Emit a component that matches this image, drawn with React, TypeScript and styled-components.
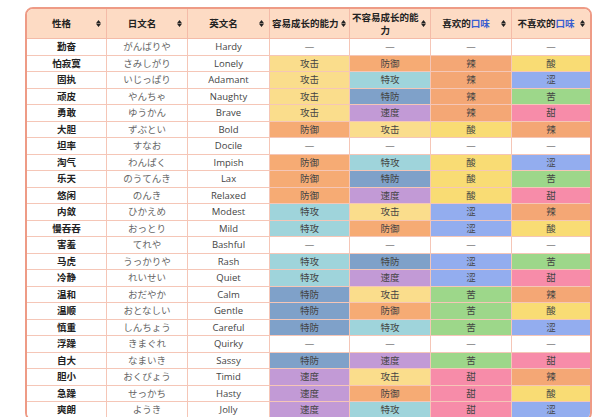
import React from 'react';
import styled, { createGlobalStyle } from 'styled-components';

const Global = createGlobalStyle`
  html, body { margin: 0; padding: 0; background: #fff; overflow: hidden; }
  body { font-family: "Open Sans", "Noto Sans CJK SC", sans-serif; }
`;

const Page = styled.div`
  padding: 7px 0 0 25px;
`;

const Frame = styled.div`
  width: 563px;
  border: 2px solid #ee9b86;
  border-radius: 8px;
  overflow: hidden;
`;

const Table = styled.table`
  width: 100%;
  table-layout: fixed;
  border-collapse: separate;
  border-spacing: 0;
  font-size: 9.5px;
`;

const Head = styled.th`
  height: 29px;
  padding: 0;
  background: #fddbc4;
  border-right: 1px solid #f4bba8;
  border-bottom: 1px solid #f4bba8;
  font-weight: bold;
  color: #222;
  line-height: 13px;
  &:last-child { border-right: none; }
`;

const HeadInner = styled.div`
  display: flex;
  align-items: center;
  padding: 0 5px 0 2px;
`;

const HeadText = styled.span`
  flex: 1;
  text-align: center;
  white-space: nowrap;
`;

const Link = styled.span`
  color: #3a5ed0;
`;

const SortIcon = styled.svg`
  width: 5px;
  height: 7px;
  flex: none;
  margin-left: 2px;
`;

const Cell = styled.td<{ $bg?: string; $kind?: 'name' | 'jp' | 'en' | 'val' }>`
  height: 15.5px;
  padding: 0;
  text-align: center;
  white-space: nowrap;
  line-height: 15px;
  background: ${(p) => p.$bg ?? '#fff'};
  border-right: 1px solid #f5c6b7;
  border-bottom: 1px solid #f5c6b7;
  font-weight: ${(p) => (p.$kind === 'name' ? 'bold' : 'normal')};
  color: ${(p) => (p.$kind === 'name' ? '#222' : p.$kind === 'jp' ? '#666' : '#444')};
  &:last-child { border-right: none; }
`;

const colors: Record<string, string> = {
  攻击: '#fadd8c',
  防御: '#f6ab74',
  特攻: '#9fd4db',
  特防: '#7fa1c9',
  速度: '#c29ad6',
  辣: '#f4a775',
  酸: '#f9dc74',
  涩: '#93adef',
  苦: '#9dd78a',
  甜: '#f78ca9',
};

const rows: string[][] = [
  ['勤奋', 'がんばりや', 'Hardy', '—', '—', '—', '—'],
  ['怕寂寞', 'さみしがり', 'Lonely', '攻击', '防御', '辣', '酸'],
  ['固执', 'いじっぱり', 'Adamant', '攻击', '特攻', '辣', '涩'],
  ['顽皮', 'やんちゃ', 'Naughty', '攻击', '特防', '辣', '苦'],
  ['勇敢', 'ゆうかん', 'Brave', '攻击', '速度', '辣', '甜'],
  ['大胆', 'ずぶとい', 'Bold', '防御', '攻击', '酸', '辣'],
  ['坦率', 'すなお', 'Docile', '—', '—', '—', '—'],
  ['淘气', 'わんぱく', 'Impish', '防御', '特攻', '酸', '涩'],
  ['乐天', 'のうてんき', 'Lax', '防御', '特防', '酸', '苦'],
  ['悠闲', 'のんき', 'Relaxed', '防御', '速度', '酸', '甜'],
  ['内敛', 'ひかえめ', 'Modest', '特攻', '攻击', '涩', '辣'],
  ['慢吞吞', 'おっとり', 'Mild', '特攻', '防御', '涩', '酸'],
  ['害羞', 'てれや', 'Bashful', '—', '—', '—', '—'],
  ['马虎', 'うっかりや', 'Rash', '特攻', '特防', '涩', '苦'],
  ['冷静', 'れいせい', 'Quiet', '特攻', '速度', '涩', '甜'],
  ['温和', 'おだやか', 'Calm', '特防', '攻击', '苦', '辣'],
  ['温顺', 'おとなしい', 'Gentle', '特防', '防御', '苦', '酸'],
  ['慎重', 'しんちょう', 'Careful', '特防', '特攻', '苦', '涩'],
  ['浮躁', 'きまぐれ', 'Quirky', '—', '—', '—', '—'],
  ['自大', 'なまいき', 'Sassy', '特防', '速度', '苦', '甜'],
  ['胆小', 'おくびょう', 'Timid', '速度', '攻击', '甜', '辣'],
  ['急躁', 'せっかち', 'Hasty', '速度', '防御', '甜', '酸'],
  ['爽朗', 'ようき', 'Jolly', '速度', '特攻', '甜', '涩'],
];

const widths = [80, 81, 82, 80, 81, 81, 78];

const Sort = () => (
  <SortIcon viewBox="0 0 5 7">
    <path d="M2.5 0 L5 3.2 L0 3.2 Z M2.5 7 L5 3.8 L0 3.8 Z" fill="#222" />
  </SortIcon>
);

const headers: React.ReactNode[] = [
  '性格',
  '日文名',
  '英文名',
  '容易成长的能力',
  <>不容易成长的能<br />力</>,
  <>喜欢的<Link>口味</Link></>,
  <>不喜欢的<Link>口味</Link></>,
];

export default function App() {
  return (
    <>
      <Global />
      <Page>
        <Frame>
          <Table>
            <colgroup>
              {widths.map((w, i) => (
                <col key={i} style={{ width: w }} />
              ))}
            </colgroup>
            <thead>
              <tr>
                {headers.map((h, i) => (
                  <Head key={i}>
                    <HeadInner>
                      <HeadText>{h}</HeadText>
                      <Sort />
                    </HeadInner>
                  </Head>
                ))}
              </tr>
            </thead>
            <tbody>
              {rows.map((r) => (
                <tr key={r[0]}>
                  <Cell $kind="name">{r[0]}</Cell>
                  <Cell $kind="jp">{r[1]}</Cell>
                  <Cell $kind="en">{r[2]}</Cell>
                  {r.slice(3).map((v, i) => (
                    <Cell key={i} $kind="val" $bg={colors[v]}>
                      {v}
                    </Cell>
                  ))}
                </tr>
              ))}
            </tbody>
          </Table>
        </Frame>
      </Page>
    </>
  );
}
